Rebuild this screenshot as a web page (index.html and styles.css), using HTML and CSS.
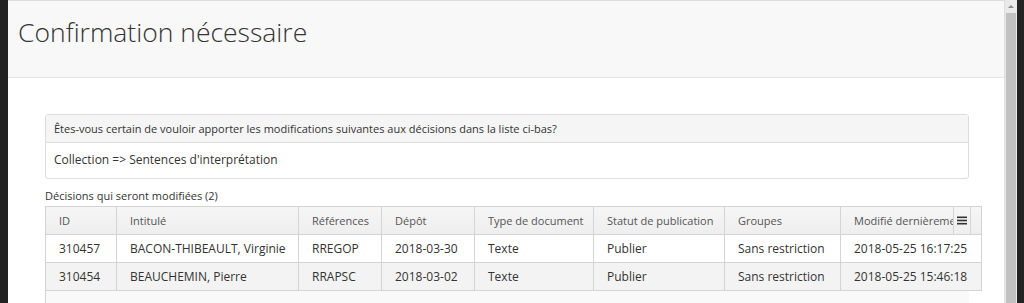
FILE: index.html
```html
<!DOCTYPE html>
<html lang="fr">
<head>
    <meta charset="UTF-8">
    <meta name="viewport" content="width=device-width, initial-scale=1.0">
    <title>Confirmation nécessaire</title>
    <link rel="stylesheet" href="styles.css">
</head>
<body>
    <div class="modal">
        <div class="modal-content">
            <div class="modal-header">
                <h1 class="modal-title">Confirmation nécessaire</h1>
            </div>
            <div class="modal-body">
                <!-- Confirmation panel -->
                <div class="panel">
                    <div class="panel-heading">Êtes-vous certain de vouloir apporter les modifications suivantes aux décisions dans la liste ci-bas?</div>
                    <div class="panel-body">Collection =&gt; Sentences d'interprétation</div>
                </div>

                <div class="grid-label">Décisions qui seront modifiées (2)</div>

                <!-- Grid of affected decisions -->
                <div class="grid">
                    <div class="grid-row grid-header">
                        <div class="cell c-id">ID</div>
                        <div class="cell c-title">Intitulé</div>
                        <div class="cell c-ref">Références</div>
                        <div class="cell c-date">Dépôt</div>
                        <div class="cell c-type">Type de document</div>
                        <div class="cell c-status">Statut de publication</div>
                        <div class="cell c-group">Groupes</div>
                        <div class="cell c-mod">Modifié dernièrement</div>
                        <div class="grid-menu">
                            <svg width="10" height="9" viewBox="0 0 10 9">
                                <rect x="0" y="0.5" width="10" height="1.6" fill="#333"/>
                                <rect x="0" y="3.7" width="10" height="1.6" fill="#333"/>
                                <rect x="0" y="6.9" width="10" height="1.6" fill="#333"/>
                            </svg>
                        </div>
                        <div class="grid-gutter"></div>
                    </div>
                    <div class="grid-row">
                        <div class="cell c-id">310457</div>
                        <div class="cell c-title">BACON-THIBEAULT, Virginie</div>
                        <div class="cell c-ref">RREGOP</div>
                        <div class="cell c-date">2018-03-30</div>
                        <div class="cell c-type">Texte</div>
                        <div class="cell c-status">Publier</div>
                        <div class="cell c-group">Sans restriction</div>
                        <div class="cell c-mod-data">2018-05-25 16:17:25</div>
                    </div>
                    <div class="grid-row striped">
                        <div class="cell c-id">310454</div>
                        <div class="cell c-title">BEAUCHEMIN, Pierre</div>
                        <div class="cell c-ref">RRAPSC</div>
                        <div class="cell c-date">2018-03-02</div>
                        <div class="cell c-type">Texte</div>
                        <div class="cell c-status">Publier</div>
                        <div class="cell c-group">Sans restriction</div>
                        <div class="cell c-mod-data">2018-05-25 15:46:18</div>
                    </div>
                    <div class="grid-empty"></div>
                </div>
            </div>
        </div>
        <div class="scrollbar">
            <div class="scroll-arrow"></div>
            <div class="scroll-thumb"></div>
        </div>
    </div>
</body>
</html>
```

FILE: styles.css
```css
/* Modal over a dark backdrop */
body {
    margin: 0;
    background-color: #222;
    font-family: "Open Sans", "Noto Sans", sans-serif;
    color: #333;
    height: 303px;
    overflow: hidden;
}
.modal {
    display: flex;
    margin-left: 8px;
    width: 1009px;
    height: 303px;
    overflow: hidden;
}
.modal-content {
    flex: 1;
    background-color: #fff;
    border-top: 1px solid #ddd;
}
.modal-header {
    background-color: #f8f8f8;
    border-bottom: 1px solid #e5e5e5;
    height: 76px;
    padding: 0 10px;
}
.modal-title {
    margin: 0;
    padding-top: 13px;
    font-size: 26.5px;
    font-weight: 300;
    line-height: 36px;
    color: #333;
}
.modal-body {
    padding: 36px 0 0 37px;
    width: 936px;
}
.panel {
    width: 922px;
    border: 1px solid #ddd;
    border-radius: 3px;
}
.panel-heading {
    background-color: #f5f5f5;
    border-bottom: 1px solid #ddd;
    height: 27px;
    line-height: 27px;
    padding-left: 8px;
    font-size: 11px;
}
.panel-body {
    height: 35px;
    line-height: 34px;
    padding-left: 8px;
    font-size: 12px;
}
.grid-label {
    margin-top: 9px;
    font-size: 11px;
    line-height: 16px;
}
.grid {
    margin-top: 2px;
    width: 936px;
    border-left: 1px solid #d4d4d4;
    border-top: 1px solid #d4d4d4;
}
.grid-row {
    display: flex;
    height: 27px;
    border-bottom: 1px solid #d4d4d4;
    border-right: 1px solid #d4d4d4;
    background-color: #fff;
}
.grid-row.striped {
    background-color: #f3f3f3;
}
.grid-header {
    background: linear-gradient(#f6f6f6, #eee);
    color: #555;
}
.cell {
    box-sizing: border-box;
    padding-left: 13px;
    font-size: 12px;
    line-height: 27px;
    white-space: nowrap;
    overflow: hidden;
    border-right: 1px solid #d4d4d4;
}
.grid-header .cell {
    font-size: 11px;
}
.c-id { width: 71px; }
.c-title { width: 182px; }
.c-ref { width: 83px; }
.c-date { width: 93px; }
.c-type { width: 119px; }
.c-status { width: 131px; }
.c-group { width: 116px; }
.c-mod { width: 112px; border-right: none; }
.c-mod-data { flex: 1; border-right: none; }
.grid-menu {
    width: 16px;
    border-left: 1px solid #d4d4d4;
    border-right: 1px solid #d4d4d4;
    display: flex;
    align-items: center;
    justify-content: center;
}
.grid-gutter {
    flex: 1;
}
.grid-empty {
    width: 923px;
    height: 14px;
    background-color: #f9f9f9;
}
/* Fake vertical scrollbar on the right */
.scrollbar {
    width: 12px;
    background-color: #e9e9e9;
    border-left: 1px solid #ddd;
    display: flex;
    flex-direction: column;
    align-items: center;
}
.scroll-arrow {
    margin-top: 5px;
    width: 0;
    height: 0;
    border-left: 3px solid transparent;
    border-right: 3px solid transparent;
    border-bottom: 3px solid #8a8a8a;
}
.scroll-thumb {
    margin-top: 5px;
    width: 10px;
    flex: 1;
    background-color: #c1c1c1;
}
```
